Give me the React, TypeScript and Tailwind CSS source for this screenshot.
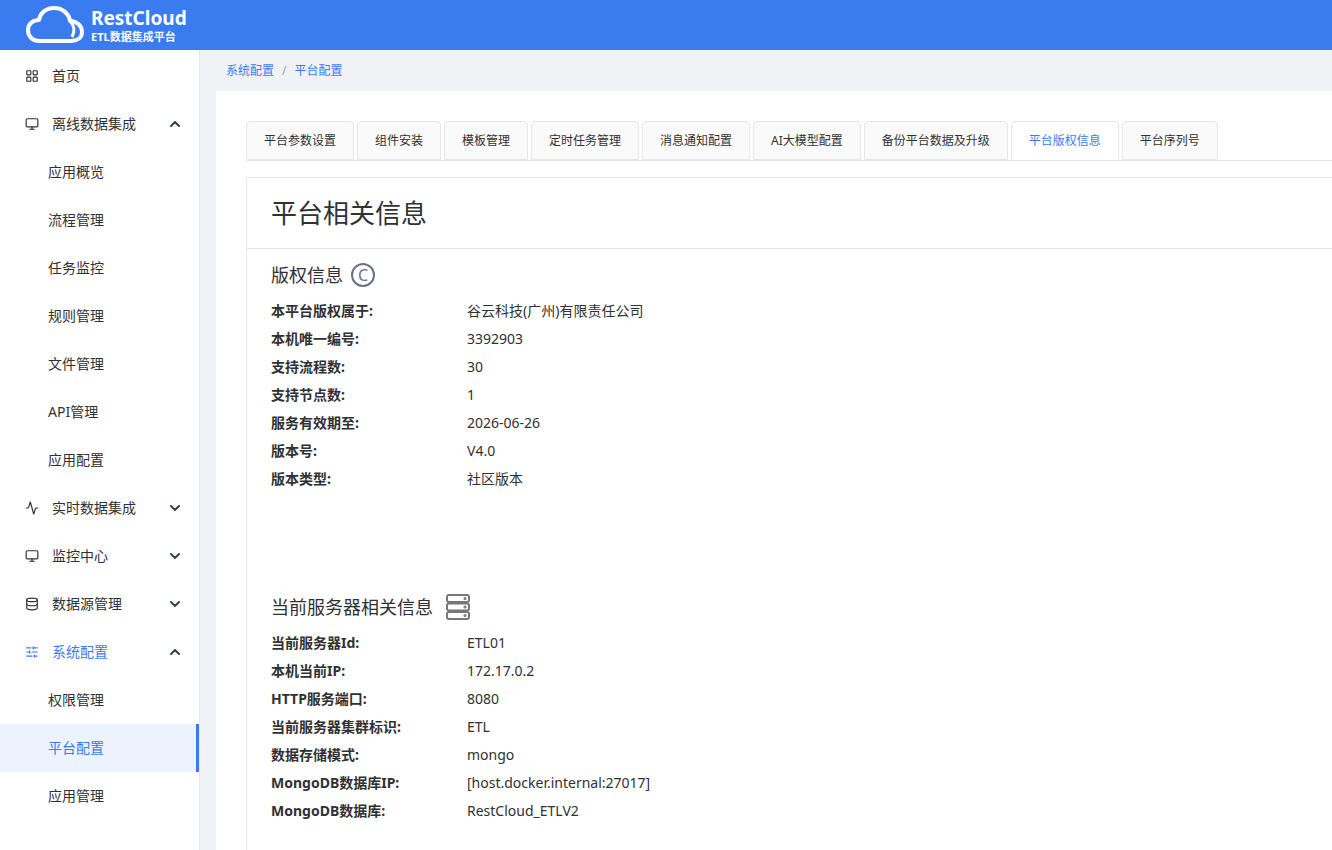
import { ChevronDown, ChevronUp, LayoutGrid, Database, SlidersHorizontal, Monitor, Activity } from "lucide-react";

const font = { fontFamily: '"Noto Sans", "Noto Sans CJK SC", sans-serif' };

function Cloud() {
  return (
    <svg width="58" height="40" viewBox="0 0 58 40" fill="none" stroke="white" strokeWidth="4" strokeLinejoin="round">
      <path d="M14 36 C6 36 2 31 2 25 C2 19 7 15 13 15 C14 8 20 3 28 3 C37 3 43 9 44 16 C51 16 56 21 56 27 C56 33 51 36 45 36 Z" />
      <path d="M44 16 C48 20 49 26 46 32" strokeWidth="3" />
    </svg>
  );
}

function TopItem({ icon, label, chevron, active }: { icon: React.ReactNode; label: string; chevron?: "up" | "down"; active?: boolean }) {
  return (
    <div className={`h-12 flex items-center pl-6 pr-4 text-sm ${active ? "text-[#3b7bf0]" : "text-[#303133]"}`}>
      <span className="w-4 mr-3 flex justify-center">{icon}</span>
      <span className="flex-1">{label}</span>
      {chevron === "up" && <ChevronUp className="w-4 h-4 text-gray-700" strokeWidth={3} />}
      {chevron === "down" && <ChevronDown className="w-4 h-4 text-gray-700" strokeWidth={3} />}
    </div>
  );
}

function SubItem({ label, active }: { label: string; active?: boolean }) {
  return (
    <div className={`h-12 flex items-center pl-12 text-sm ${active ? "bg-[#ecf3ff] text-[#3b7bf0] border-r-[3px] border-[#3b7bf0]" : "text-[#303133]"}`}>
      {label}
    </div>
  );
}

function Row({ k, v }: { k: string; v: string }) {
  return (
    <div className="flex h-7 items-center text-sm text-[#303133]">
      <span className="w-[196px] font-bold">{k}</span>
      <span>{v}</span>
    </div>
  );
}

const tabs = ["平台参数设置", "组件安装", "模板管理", "定时任务管理", "消息通知配置", "AI大模型配置", "备份平台数据及升级", "平台版权信息", "平台序列号"];

export default function App() {
  return (
    <div className="w-[1332px] h-[850px] overflow-hidden flex flex-col bg-[#f0f2f5]" style={font}>
      <div className="h-[50px] bg-[#3b7bf0] flex items-center pl-[26px] shrink-0">
        <Cloud />
        <div className="ml-[7px] text-white leading-none">
          <div className="text-[19px] font-bold">RestCloud</div>
          <div className="text-[11px] font-bold mt-[3px]">ETL数据集成平台</div>
        </div>
      </div>
      <div className="flex flex-1 min-h-0">
        <div className="w-[200px] bg-white border-r border-gray-200 pt-[2px] shrink-0">
          <TopItem icon={<LayoutGrid className="w-3.5 h-3.5" />} label="首页" />
          <TopItem icon={<Monitor className="w-3.5 h-3.5" />} label="离线数据集成" chevron="up" />
          <SubItem label="应用概览" />
          <SubItem label="流程管理" />
          <SubItem label="任务监控" />
          <SubItem label="规则管理" />
          <SubItem label="文件管理" />
          <SubItem label="API管理" />
          <SubItem label="应用配置" />
          <TopItem icon={<Activity className="w-3.5 h-3.5" />} label="实时数据集成" chevron="down" />
          <TopItem icon={<Monitor className="w-3.5 h-3.5" />} label="监控中心" chevron="down" />
          <TopItem icon={<Database className="w-3.5 h-3.5" />} label="数据源管理" chevron="down" />
          <TopItem icon={<SlidersHorizontal className="w-3.5 h-3.5" />} label="系统配置" chevron="up" active />
          <SubItem label="权限管理" />
          <SubItem label="平台配置" active />
          <SubItem label="应用管理" />
        </div>
        <div className="flex-1 min-w-0 flex flex-col pl-4">
          <div className="h-[41px] flex items-center pl-[10px] text-xs text-[#3b7bf0] gap-2">
            <span>系统配置</span><span className="text-gray-400">/</span><span>平台配置</span>
          </div>
          <div className="flex-1 bg-white pl-[30px] pt-[30px]">
            <div className="flex gap-[3px] border-b border-gray-200">
              {tabs.map((t, i) => (
                <div key={t} className={`h-[39px] px-[17px] flex items-center text-xs border border-gray-200 rounded-t ${i === 7 ? "bg-white text-[#3b7bf0] border-b-white -mb-px" : "bg-[#fafafa] text-[#303133]"}`}>
                  {t}
                </div>
              ))}
            </div>
            <div className="mt-4 border border-gray-200 border-r-0 h-full">
              <div className="h-[71px] flex items-center pl-6 text-[26px] text-[#303133] border-b border-gray-200">平台相关信息</div>
              <div className="pl-6 pt-3">
                <div className="flex items-center text-lg text-[#303133] h-7 mb-2">
                  版权信息
                  <span className="ml-2 w-6 h-6 rounded-full border-2 border-gray-500 text-gray-500 flex items-center justify-center text-base">C</span>
                </div>
                <Row k="本平台版权属于:" v="谷云科技(广州)有限责任公司" />
                <Row k="本机唯一编号:" v="3392903" />
                <Row k="支持流程数:" v="30" />
                <Row k="支持节点数:" v="1" />
                <Row k="服务有效期至:" v="2026-06-26" />
                <Row k="版本号:" v="V4.0" />
                <Row k="版本类型:" v="社区版本" />
                <div className="flex items-center text-lg text-[#303133] h-7 mt-[100px] mb-2">
                  当前服务器相关信息
                  <svg className="ml-3" width="26" height="26" viewBox="0 0 26 26" fill="none" stroke="#777" strokeWidth="2">
                    <rect x="2" y="1" width="22" height="7" rx="2" />
                    <rect x="2" y="9.5" width="22" height="7" rx="2" />
                    <rect x="2" y="18" width="22" height="7" rx="2" />
                    <circle cx="20" cy="4.5" r="0.6" fill="#777" />
                    <circle cx="20" cy="13" r="0.6" fill="#777" />
                    <circle cx="20" cy="21.5" r="0.6" fill="#777" />
                  </svg>
                </div>
                <Row k="当前服务器Id:" v="ETL01" />
                <Row k="本机当前IP:" v="172.17.0.2" />
                <Row k="HTTP服务端口:" v="8080" />
                <Row k="当前服务器集群标识:" v="ETL" />
                <Row k="数据存储模式:" v="mongo" />
                <Row k="MongoDB数据库IP:" v="[host.docker.internal:27017]" />
                <Row k="MongoDB数据库:" v="RestCloud_ETLV2" />
              </div>
            </div>
          </div>
        </div>
      </div>
    </div>
  );
}
